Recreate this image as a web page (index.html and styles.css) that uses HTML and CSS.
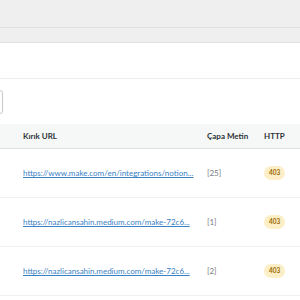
FILE: index.html
```html
<!DOCTYPE html>
<html lang="tr">
<head>
<meta charset="utf-8">
<link rel="stylesheet" href="styles.css">
</head>
<body>
<div class="topbar"></div>
<div class="subbar"></div>
<div class="panel">
  <div class="section"></div>
  <div class="filters"><div class="input"></div></div>
  <div class="table">
    <div class="row head">
      <div class="c1">Kırık URL</div>
      <div class="c2">Çapa Metin</div>
      <div class="c3">HTTP</div>
    </div>
    <div class="row">
      <div class="c1"><a href="#">https://www.make.com/en/integrations/notion...</a></div>
      <div class="c2 muted">[25]</div>
      <div class="c3"><span class="badge">403</span></div>
    </div>
    <div class="row">
      <div class="c1"><a href="#">https://nazlicansahin.medium.com/make-72c6...</a></div>
      <div class="c2 muted">[1]</div>
      <div class="c3"><span class="badge">403</span></div>
    </div>
    <div class="row">
      <div class="c1"><a href="#">https://nazlicansahin.medium.com/make-72c6...</a></div>
      <div class="c2 muted">[2]</div>
      <div class="c3"><span class="badge">403</span></div>
    </div>
  </div>
</div>
</body>
</html>
```
FILE: styles.css
```css
* { box-sizing: border-box; }
html, body { margin: 0; padding: 0; background: #fff; }
body { font-family: "Lato", "Open Sans", sans-serif; font-size: 8px; color: #2c3338; overflow: hidden; width: 300px; height: 300px; }
.topbar { height: 28px; background: #efefef; border-bottom: 1px solid #e0e0e0; }
.subbar { height: 15px; background: #efefef; border-bottom: 1px solid #e2e2e2; }
.panel { background: #fff; }
.section { height: 36px; border-bottom: 1px solid #ececec; }
.filters { height: 45px; display: flex; align-items: center; }
.input { width: 20px; height: 24px; margin-left: -17px; border: 1px solid #c9c9c9; border-radius: 3px; background: #fff; }
.row { display: grid; grid-template-columns: 207px 57px 1fr; align-items: center; height: 49px; border-bottom: 1px solid #f2f2f2; white-space: nowrap; }
.row .c1 { padding-left: 23px; overflow: hidden; }
.row.head { height: 25px; background: #f6f7f7; border-bottom: 1px solid #e0e0e0; font-weight: 700; color: #2c3338; }
a { color: #3b82c4; text-decoration: underline; }
.muted { color: #787c82; }
.badge { display: inline-block; background: #fcefc7; color: #9a6a00; font-weight: 700; font-size: 6.5px; line-height: 14px; padding: 0 5px; border-radius: 7px; }
```
